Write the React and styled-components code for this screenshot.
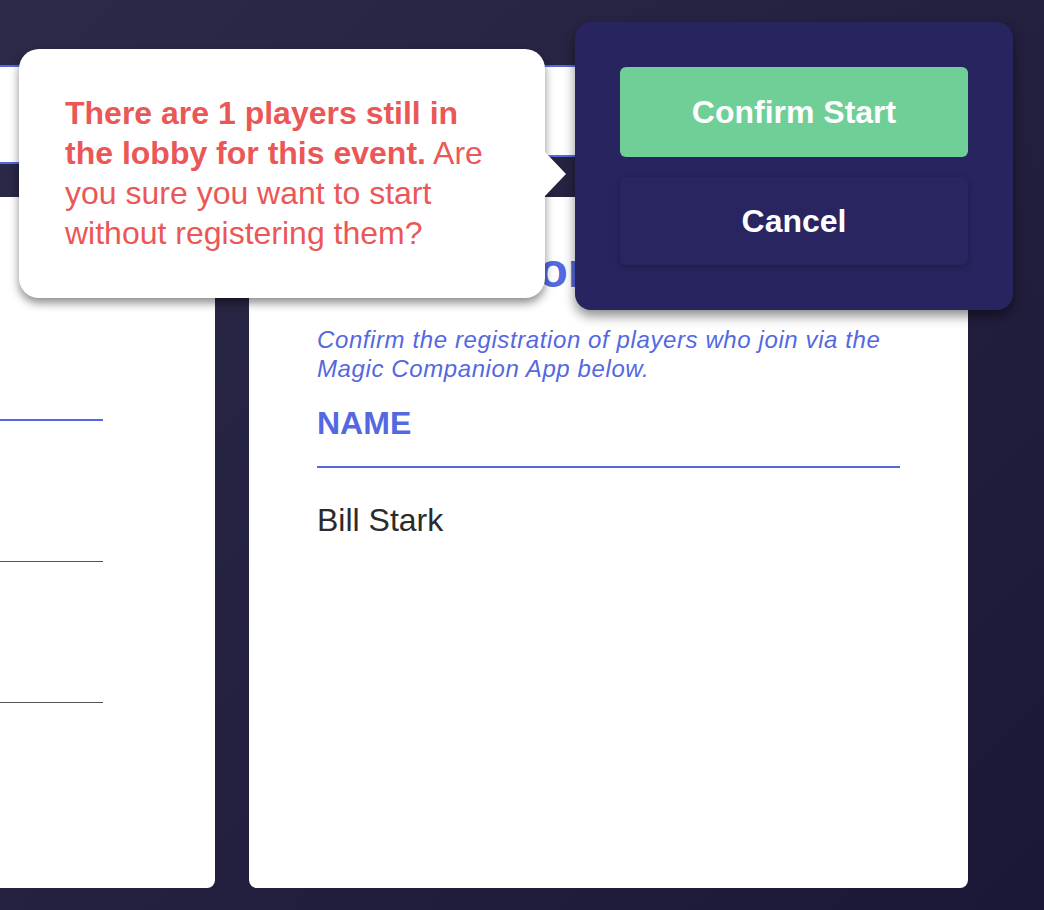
import React from 'react'
import styled, { createGlobalStyle } from 'styled-components'

const GlobalStyle = createGlobalStyle`
  html, body {
    margin: 0;
    padding: 0;
    height: 100%;
  }
  body {
    font-family: "Liberation Sans", Arial, sans-serif;
    overflow: hidden;
  }
  #root {
    height: 100%;
  }
`

const blue = '#5468df'
const red = '#eb5757'
const navy = '#27245f'

const Page = styled.div`
  position: relative;
  box-sizing: border-box;
  height: 910px;
  padding: 65px 76px 22px 0;
  display: grid;
  grid-template-columns: 215px 719px;
  grid-template-rows: auto 1fr;
  column-gap: 34px;
  row-gap: 33px;
  align-items: start;
  background: linear-gradient(135deg, #2c2a49 0%, #23213f 50%, #1a1836 100%);
`

const TopBar = styled.div`
  background: #fff;
  border-top: 2px solid ${blue};
  border-bottom: 2px solid ${blue};
  height: ${p => p.$h}px;
`

const Card = styled.div`
  align-self: stretch;
  background: #fff;
  border-radius: ${p => (p.$flush ? '0 8px 8px 0' : '8px')};
  box-sizing: border-box;
  padding: ${p => (p.$flush ? '0' : '46px 68px')};
`

const SideTable = styled.div`
  width: 103px;
  padding-top: 222px;
`

const SideHead = styled.div`
  border-bottom: 2px solid ${blue};
`

const SideRow = styled.div`
  height: 140px;
  border-bottom: 1px solid #555;
`

const Heading = styled.h1`
  margin: 0;
  font-size: 48px;
  line-height: 56px;
  font-weight: 700;
  color: ${blue};
`

const Intro = styled.p`
  margin: 26px 0 0;
  font-size: 24px;
  line-height: 29px;
  font-style: italic;
  letter-spacing: 0.6px;
  color: ${blue};
`

const NameHead = styled.div`
  margin-top: 20px;
  padding-bottom: 23px;
  border-bottom: 2px solid ${blue};
  font-size: 32px;
  line-height: 40px;
  font-weight: 700;
  color: ${blue};
`

const NameCell = styled.div`
  padding-top: 32px;
  font-size: 32px;
  line-height: 40px;
  color: #2b2b2b;
`

const Tip = styled.div`
  position: absolute;
  left: 19px;
  top: 49px;
  width: 526px;
  box-sizing: border-box;
  padding: 44px 46px 45px;
  background: #fff;
  border-radius: 20px;
  box-shadow: 0 5px 10px rgba(0, 0, 0, 0.45);
  font-size: 32px;
  line-height: 40px;
  color: ${red};

  &::after {
    content: '';
    position: absolute;
    left: 100%;
    top: 103px;
    border-left: 21px solid #fff;
    border-top: 22px solid transparent;
    border-bottom: 22px solid transparent;
  }

  strong {
    font-weight: 700;
  }
`

const Pop = styled.div`
  position: absolute;
  left: 575px;
  top: 22px;
  width: 438px;
  box-sizing: border-box;
  padding: 45px;
  display: flex;
  flex-direction: column;
  gap: 20px;
  background: ${navy};
  border-radius: 16px;
  box-shadow: 0 6px 12px rgba(0, 0, 0, 0.45);
`

const Button = styled.button`
  height: ${p => (p.$primary ? 90 : 88)}px;
  border: none;
  border-radius: 6px;
  font-family: inherit;
  font-size: 32px;
  font-weight: 700;
  color: #fff;
  background: ${p => (p.$primary ? '#6fcf97' : '#282561')};
  box-shadow: ${p => (p.$primary ? 'none' : '0 2px 6px rgba(0, 0, 0, 0.22)')};
  cursor: pointer;
`

export default function App() {
  return (
    <>
      <GlobalStyle />
      <Page>
        <TopBar $h={95} />
        <TopBar $h={88} />
        <Card $flush>
          <SideTable>
            <SideHead />
            <SideRow />
            <SideRow />
          </SideTable>
        </Card>
        <Card>
          <Heading>Registration</Heading>
          <Intro>Confirm the registration of players who join via the Magic Companion App below.</Intro>
          <NameHead>NAME</NameHead>
          <NameCell>Bill Stark</NameCell>
        </Card>

        <Tip>
          <strong>There are 1 players still in the lobby for this event.</strong> Are you sure you want to start without registering them?
        </Tip>

        <Pop>
          <Button $primary>Confirm Start</Button>
          <Button>Cancel</Button>
        </Pop>
      </Page>
    </>
  )
}
